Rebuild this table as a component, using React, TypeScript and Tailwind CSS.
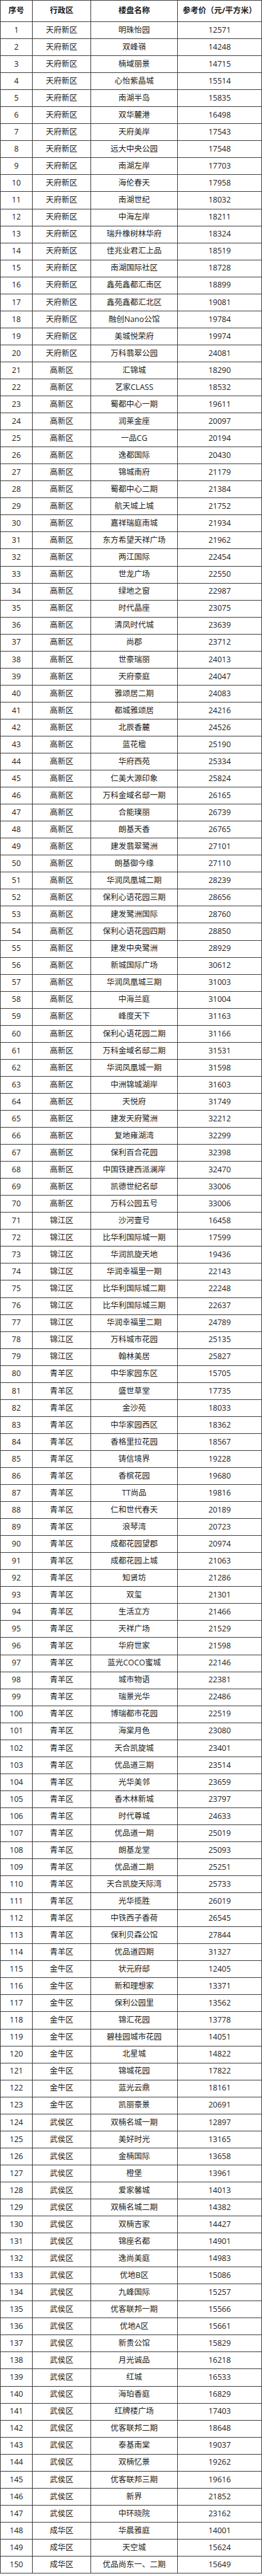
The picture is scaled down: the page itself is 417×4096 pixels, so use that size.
const groups: [string, string][] = [
  ["天府新区", "明珠怡园 12571,双峰嶺 14248,楠域丽景 14715,心怡紫晶城 15514,南湖半岛 15835,双华麓港 16498,天府美岸 17543,远大中央公园 17548,南湖左岸 17703,海伦春天 17958,南湖世纪 18032,中海左岸 18211,瑞升橡树林华府 18324,佳兆业君汇上品 18519,南湖国际社区 18728,鑫苑鑫都汇南区 18899,鑫苑鑫都汇北区 19081,融创Nano公馆 19784,美城悦荣府 19974,万科翡翠公园 24081"],
  ["高新区", "汇锦城 18290,艺家CLASS 18532,蜀都中心一期 19611,润莱金座 20097,一品CG 20194,逸都国际 20430,锦城南府 21179,蜀都中心二期 21384,航天城上城 21752,嘉祥瑞庭南城 21934,东方希望天祥广场 21962,两江国际 22454,世龙广场 22550,绿地之窗 22987,时代晶座 23075,清凤时代城 23639,尚郡 23712,世豪瑞丽 24013,天府豪庭 24047,雅颂居二期 24083,都城雅颂居 24216,北辰香麓 24526,蓝花楹 25190,华府西苑 25334,仁美大源印象 25824,万科金域名邸一期 26165,合能璞丽 26739,朗基天香 26765,建发翡翠鹭洲 27101,朗基御今缘 27110,华润凤凰城二期 28239,保利心语花园三期 28656,建发鹭洲国际 28760,保利心语花园四期 28850,建发中央鹭洲 28929,新城国际广场 30612,华润凤凰城三期 31003,中海兰庭 31004,峰度天下 31163,保利心语花园二期 31166,万科金域名邸二期 31531,华润凤凰城一期 31598,中洲锦城湖岸 31603,天悦府 31749,建发天府鹭洲 32212,复地雍湖湾 32299,保利百合花园 32398,中国铁建西派澜岸 32470,凯德世纪名邸 33006,万科公园五号 33006"],
  ["锦江区", "沙河壹号 16458,比华利国际城一期 17599,华润凯旋天地 19436,华润幸福里一期 22143,比华利国际城二期 22248,比华利国际城三期 22637,华润幸福里二期 24789,万科城市花园 25135,翰林美居 25827"],
  ["青羊区", "中华家园东区 15705,盛世草堂 17735,金沙苑 18033,中华家园西区 18362,香格里拉花园 18567,铸信境界 19228,香槟花园 19680,TT尚品 19816,仁和世代春天 20189,浪琴湾 20723,成都花园望郡 20974,成都花园上城 21063,知贤坊 21286,双玺 21301,生活立方 21466,天祥广场 21529,华府世家 21598,蓝光COCO蜜城 22146,城市物语 22381,瑞景光华 22486,博瑞都市花园 22519,海棠月色 23080,天合凯旋城 23401,优品道三期 23514,光华美邻 23659,香木林新城 23797,时代尊城 24633,优品道一期 25019,朗基龙堂 25093,优品道二期 25251,天合凯旋天际湾 25733,光华揽胜 26019,中铁西子香荷 26545,保利贝森公馆 27844,优品道四期 31327"],
  ["金牛区", "状元府邸 12405,新和理想家 13371,保利公园里 13562,锦汇花园 13778,碧桂园城市花园 14051,北星城 14822,锦城花园 17822,蓝光云鼎 18161,凯丽豪景 20691"],
  ["武侯区", "双楠名城一期 12897,美好时光 13165,金楠国际 13658,橙堡 13961,爱家馨城 14013,双楠名城二期 14382,双楠吉家 14427,锦座名都 14901,逸尚美庭 14983,优地B区 15086,九峰国际 15257,优客联邦一期 15566,优地A区 15661,新贵公馆 15829,月光诚品 16218,红城 16533,海珀香庭 16829,红牌楼广场 17403,优客联邦二期 18648,泰基南棠 19037,双楠忆景 19262,优客联邦三期 19616,新界 21852,中环晓院 23162"],
  ["成华区", "华晨雅庭 14001,天空城 15624,优品尚东一、二期 15649"],
];

const rows = groups.flatMap(([district, list]) =>
  list.split(",").map((item) => {
    const [name, price] = item.split(" ");
    return { district, name, price };
  })
);

const cell = "flex items-center justify-center border-r border-b border-[#3a3a3a] whitespace-nowrap";

export default function App() {
  return (
    <div
      className="w-[417px] bg-white text-[#1c1c1c] text-[12.5px] leading-none"
      style={{ fontFamily: '"Open Sans", "Noto Sans CJK SC", sans-serif' }}
    >
      <div className="border-l border-t border-[#3a3a3a]">
        {/* header */}
        <div className="grid grid-cols-[51px_93px_138px_1fr] h-[34px] font-bold">
          <div className={cell}>序号</div>
          <div className={cell}>行政区</div>
          <div className={cell}>楼盘名称</div>
          <div className={cell}>参考价（元/平方米）</div>
        </div>

        {rows.map((r, i) => (
          <div key={i} className="grid grid-cols-[51px_93px_138px_1fr] h-[27.05px]">
            <div className={cell}>{i + 1}</div>
            <div className={cell}>{r.district}</div>
            <div className={cell}>{r.name}</div>
            <div className={cell}>{r.price}</div>
          </div>
        ))}
      </div>
    </div>
  );
}
